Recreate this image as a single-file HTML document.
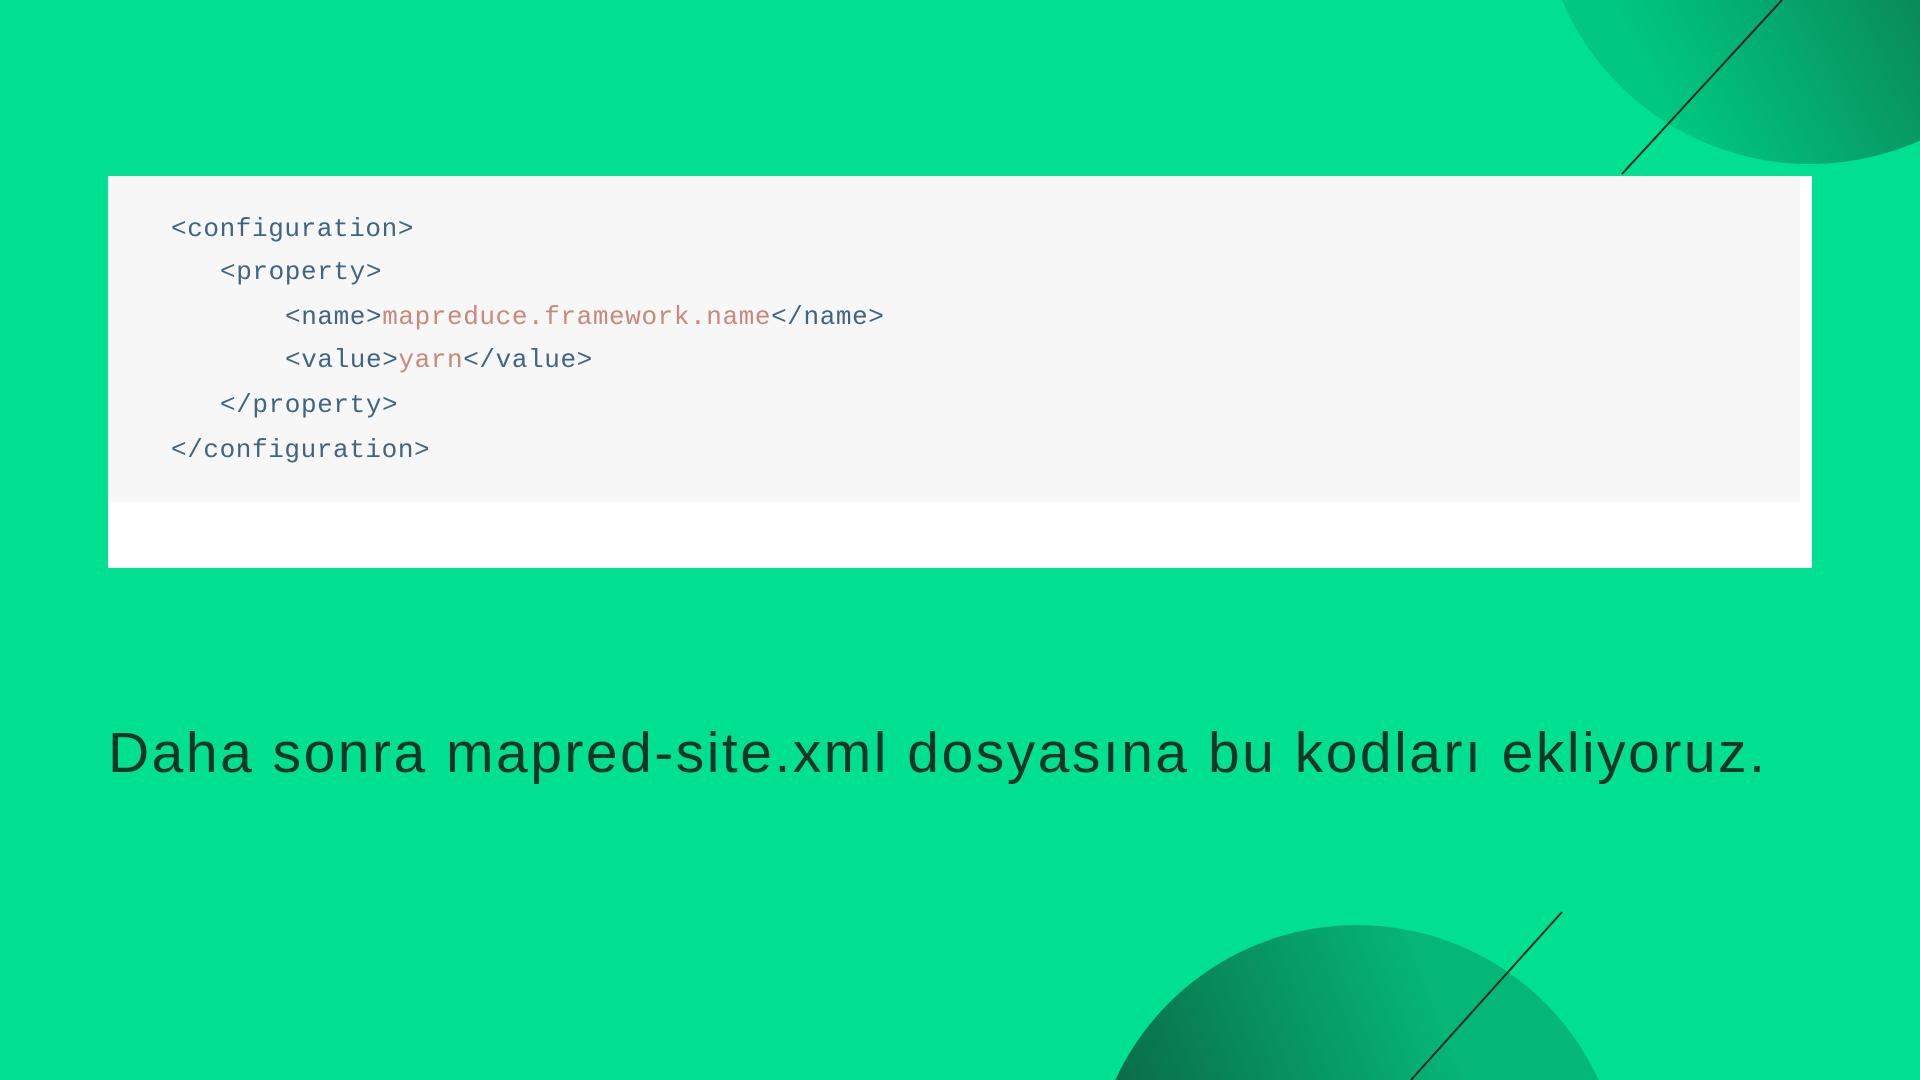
<!DOCTYPE html>
<html><head><meta charset="utf-8"><style>
html,body{margin:0;padding:0;width:1920px;height:1080px;overflow:hidden}
#w{width:1920px;height:1080px;background:#00e091;position:relative;overflow:hidden;font-family:"Liberation Sans",sans-serif}
.box{position:absolute;left:108px;top:176px;width:1704px;height:392px;background:#fff}
.code{position:absolute;left:0;top:0;width:1692px;height:326px;background:#f8f7f8}
.ln{position:absolute;font-family:"Liberation Mono",monospace;font-size:26px;letter-spacing:0.6px;color:#3f6582;white-space:pre}
.v{color:#c98878}
.txt{position:absolute;left:108px;top:720px;font-size:57px;color:#143626;white-space:nowrap;letter-spacing:2.5px}
</style></head><body><div id="w">
<svg style="position:absolute;left:0;top:0" width="1920" height="1080" viewBox="0 0 1920 1080">
<defs>
<linearGradient id="g1" gradientUnits="userSpaceOnUse" x1="1920" y1="0" x2="1620" y2="160"><stop offset="0" stop-color="#0a8a58"/><stop offset="0.8" stop-color="#00c781"/></linearGradient>
<linearGradient id="g2" gradientUnits="userSpaceOnUse" x1="1120" y1="1080" x2="1500" y2="930"><stop offset="0" stop-color="#0a6e48"/><stop offset="0.8" stop-color="#05b777"/></linearGradient>
</defs>
<path d="M1561.7,0 A270,270 0 0,0 1920,140.6 L1920,0 Z" fill="url(#g1)"/>
<path d="M1115.3,1080 A266,266 0 0,1 1598.7,1080 Z" fill="url(#g2)"/>
<line x1="1782" y1="0" x2="1622" y2="174" stroke="#1a2a22" stroke-width="2"/>
<line x1="1562" y1="912" x2="1411" y2="1080" stroke="#1a2a22" stroke-width="2"/>
</svg>
<div class="box"><div class="code">
<div class="ln" style="left:63px;top:38px">&lt;configuration&gt;</div>
<div class="ln" style="left:112px;top:81px">&lt;property&gt;</div>
<div class="ln" style="left:177px;top:126px">&lt;name&gt;<span class="v">mapreduce.framework.name</span>&lt;/name&gt;</div>
<div class="ln" style="left:177px;top:169px">&lt;value&gt;<span class="v">yarn</span>&lt;/value&gt;</div>
<div class="ln" style="left:112px;top:214px">&lt;/property&gt;</div>
<div class="ln" style="left:63px;top:259px">&lt;/configuration&gt;</div>
</div></div>
<div class="txt">Daha sonra mapred-site.xml dosyasına bu kodları ekliyoruz.</div>
</div></body></html>
